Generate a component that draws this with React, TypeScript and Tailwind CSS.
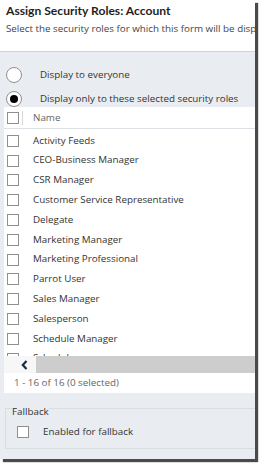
import React from "react";

const roles = [
  "Activity Feeds",
  "CEO-Business Manager",
  "CSR Manager",
  "Customer Service Representative",
  "Delegate",
  "Marketing Manager",
  "Marketing Professional",
  "Parrot User",
  "Sales Manager",
  "Salesperson",
  "Schedule Manager",
  "Scheduler",
];

const font = { fontFamily: '"Segoe UI", "Open Sans", "Noto Sans", sans-serif' };
const titleFont = { fontFamily: '"Segoe UI", Lato, "Noto Sans", sans-serif' };

function Box() {
  return <span className="block w-[12px] h-[12px] border border-[#8f8f8f] bg-white shrink-0" />;
}

export default function App() {
  return (
    <div className="w-[260px] h-[463px] bg-white overflow-hidden" style={font}>
      <div className="w-[255px] h-[459px] bg-[#e9edf1] flex flex-col shadow-[3px_3px_1px_#4a4a4a] text-[#333]">
        <div className="bg-white h-[52px] shrink-0 border-b border-[#cfd4da] pl-[6px] pt-[3px] overflow-hidden">
          <div style={titleFont} className="text-[12.1px] font-bold text-[#1f1f1f] leading-[16px] whitespace-nowrap">Assign Security Roles: Account</div>
          <div className="mt-[2px] text-[9.8px] leading-[16px] whitespace-nowrap text-[#444]">Select the security roles for which this form will be displayed.</div>
        </div>
        <div className="h-[55px] shrink-0 flex flex-col pt-[15px] gap-[8px] pl-[6px]">
          <div className="flex items-center h-[16px]">
            <span className="w-[16px] h-[16px] rounded-full border border-[#8f8f8f] bg-white shrink-0" />
            <span className="ml-[18px] text-[9.8px] whitespace-nowrap">Display to everyone</span>
          </div>
          <div className="flex items-center h-[16px]">
            <span className="w-[16px] h-[16px] rounded-full border border-[#8f8f8f] bg-white shrink-0 flex items-center justify-center">
              <span className="w-[8px] h-[8px] rounded-full bg-black" />
            </span>
            <span className="ml-[18px] text-[9.8px] whitespace-nowrap">Display only to these selected security roles</span>
          </div>
        </div>
        <div className="bg-white h-[286px] shrink-0 ml-[4px] flex flex-col">
          <div className="h-[22px] shrink-0 border-b border-[#dde1e5] flex items-center pl-[3px] pt-[1px]">
            <Box />
            <span className="w-px h-[14px] bg-[#d5d5d5] ml-[3px]" />
            <span className="ml-[10px] text-[9.8px] text-[#666]">Name</span>
          </div>
          <div className="h-[227px] shrink-0 overflow-hidden pt-[2px]">
            {roles.map((r) => (
              <div key={r} className="h-[19.8px] flex items-center pl-[3px]">
                <Box />
                <span className="ml-[14px] text-[9.8px] whitespace-nowrap">{r}</span>
              </div>
            ))}
          </div>
          <div className="h-[17px] shrink-0 bg-[#cdcdcd] flex">
            <div className="w-[32px] bg-[#f7f7f7] flex items-center pl-[17px]">
              <svg width="7" height="10" viewBox="0 0 7 10">
                <path d="M5.5 1 L1.8 5 L5.5 9" fill="none" stroke="#1c2b4a" strokeWidth="2.2" />
              </svg>
            </div>
          </div>
          <div className="h-[20px] shrink-0 flex items-center pl-[10px] text-[9.8px] text-[#666]">1 - 16 of 16 (0 selected)</div>
        </div>
        <fieldset className="mt-[4px] ml-[5px] mr-0 border border-[#d9dde2] border-r-0 h-[52px] pl-[6px] pr-0 pt-0 pb-0">
          <legend className="text-[9.8px] px-0 pt-[8px] leading-[14px]">Fallback</legend>
          <div className="flex items-center h-[14px] mt-[6px] pl-[5px]">
            <Box />
            <span className="ml-[14px] text-[9.8px]">Enabled for fallback</span>
          </div>
        </fieldset>
      </div>
    </div>
  );
}
